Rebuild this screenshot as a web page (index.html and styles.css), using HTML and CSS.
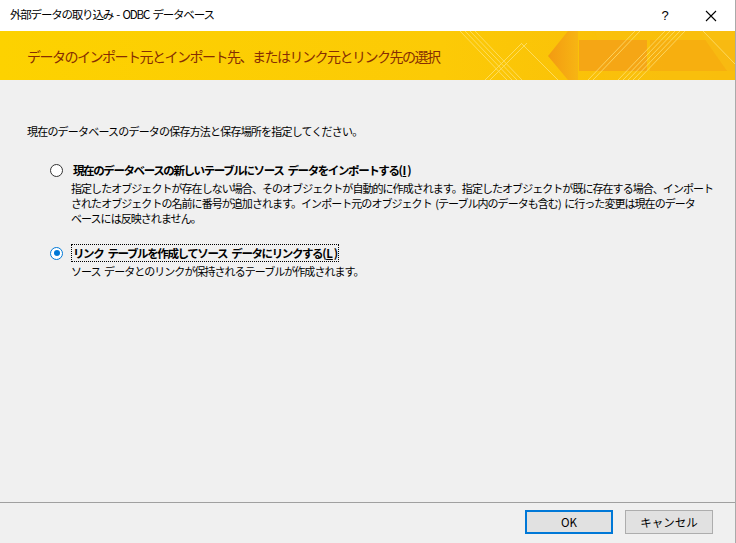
FILE: index.html
```html
<!DOCTYPE html>
<html>
<head>
    <title>外部データの取り込み - ODBC データベース</title>
    <link rel="stylesheet" href="styles.css">
</head>
<body>
    <div class="dialog">
        <div class="titlebar">
            <span class="title">外部データの取り込み - ODBC データベース</span>
            <span class="help">?</span>
            <span class="close">
                <svg width="12" height="12" viewBox="0 0 12 12"><path d="M1 1L11 11M11 1L1 11" stroke="#000" stroke-width="1.1" fill="none"/></svg>
            </span>
        </div>

        <div class="banner">
            <svg class="banner-art" width="290" height="49" viewBox="0 0 290 49">
                <defs>
                    <linearGradient id="arrowfill" x1="0" x2="1" y1="0" y2="0">
                        <stop offset="0" stop-color="#f39a12"/>
                        <stop offset="1" stop-color="#f7b513"/>
                    </linearGradient>
                </defs>
                <polygon points="150,0 290,0 290,49 160,49" fill="#f9c10d" opacity="0.7"/>
                <polygon points="205,9 290,9 290,40 205,40" fill="#f6ab10" opacity="0.8"/>
                <polygon points="254,0 290,0 290,40 282,40" fill="#f9c213" opacity="0.6"/>
                <polygon points="123,0 133,0 133,49 123,49 103,25" fill="url(#arrowfill)"/>
                <rect x="134" y="9" width="68" height="31" fill="#f5a615"/>
                <g stroke="#ffe680" stroke-width="1" opacity="0.7">
                    <line x1="15" y1="0" x2="62" y2="49"/>
                    <line x1="20" y1="0" x2="67" y2="49"/>
                    <line x1="25" y1="0" x2="72" y2="49"/>
                    <line x1="30" y1="0" x2="77" y2="49"/>
                    <line x1="40" y1="49" x2="77" y2="12"/>
                    <line x1="45" y1="49" x2="82" y2="12"/>
                    <line x1="76" y1="12" x2="113" y2="49"/>
                    <line x1="190" y1="0" x2="143" y2="49"/>
                    <line x1="195" y1="0" x2="148" y2="49"/>
                    <line x1="220" y1="0" x2="173" y2="49"/>
                    <line x1="225" y1="0" x2="178" y2="49"/>
                    <line x1="230" y1="0" x2="183" y2="49"/>
                    <line x1="235" y1="0" x2="188" y2="49"/>
                    <line x1="240" y1="0" x2="193" y2="49"/>
                    <line x1="258" y1="0" x2="290" y2="33"/>
                </g>
            </svg>
            <h1>データのインポート元とインポート先、またはリンク元とリンク先の選択</h1>
        </div>

        <div class="content">
            <p class="intro">現在のデータベースのデータの保存方法と保存場所を指定してください。</p>

            <div class="option">
                <label class="choice">
                    <span class="radio"></span>
                    <span class="choice-text">現在のデータベースの新しいテーブルにソース データをインポートする(<u>I</u>)</span>
                </label>
                <p class="desc">指定したオブジェクトが存在しない場合、そのオブジェクトが自動的に作成されます。指定したオブジェクトが既に存在する場合、インポート<br>されたオブジェクトの名前に番号が追加されます。インポート元のオブジェクト (テーブル内のデータも含む) に行った変更は現在のデータ<br>ベースには反映されません。</p>
            </div>

            <div class="option">
                <label class="choice">
                    <span class="radio checked"></span>
                    <span class="choice-text focused">リンク テーブルを作成してソース データにリンクする(<u>L</u>)</span>
                </label>
                <p class="desc">ソース データとのリンクが保持されるテーブルが作成されます。</p>
            </div>
        </div>

        <div class="footer">
            <button class="btn default">OK</button>
            <button class="btn">キャンセル</button>
        </div>
    </div>
</body>
</html>
```

FILE: styles.css
```css
html, body {
    margin: 0;
    padding: 0;
}
body {
    font-family: "Noto Sans CJK JP", "Noto Sans", sans-serif;
    font-size: 11px;
    color: #000;
    background: #f0f0f0;
}
.dialog {
    width: 736px;
    height: 543px;
    display: flex;
    flex-direction: column;
    background: #f0f0f0;
    border-right: 1px solid #aaa;
    box-sizing: border-box;
}
.titlebar {
    height: 31px;
    background: #fff;
    display: flex;
    align-items: center;
    padding-left: 10px;
    flex-shrink: 0;
}
.title {
    flex: 1;
    font-size: 11.5px;
    line-height: 1;
    padding-bottom: 1px;
    letter-spacing: -1.2px;
    word-spacing: 2px;
}
.help {
    width: 46px;
    text-align: center;
    font-family: "Liberation Sans", sans-serif;
    font-size: 13px;
}
.close {
    width: 46px;
    display: flex;
    justify-content: center;
    margin-right: 1px;
}
.banner {
    position: relative;
    height: 49px;
    background: linear-gradient(90deg, #fdd200 0%, #fcca06 60%, #f8b90b 100%);
    display: flex;
    align-items: center;
    flex-shrink: 0;
    overflow: hidden;
}
.banner-art {
    position: absolute;
    right: 0;
    top: 0;
}
.banner h1 {
    position: relative;
    margin: 0 0 0 27px;
    font-size: 14px;
    line-height: 18px;
    font-weight: normal;
    color: #862d03;
    letter-spacing: -1.5px;
}
.content {
    flex: 1;
    padding: 44px 28px 0 27px;
}
.intro {
    margin: 0 0 21px;
    line-height: 15px;
    letter-spacing: -0.8px;
}
.option {
    margin-left: 23px;
    margin-bottom: 17px;
}
.choice {
    display: flex;
    align-items: center;
    height: 20px;
}
.radio {
    width: 11px;
    height: 11px;
    border: 1px solid #333;
    border-radius: 50%;
    background: #fff;
    margin-right: 8px;
    flex-shrink: 0;
    position: relative;
}
.radio.checked {
    border-color: #0078d7;
}
.radio.checked::after {
    content: "";
    position: absolute;
    left: 2.5px;
    top: 2.5px;
    width: 6px;
    height: 6px;
    border-radius: 50%;
    background: #0078d7;
}
.choice-text {
    font-weight: bold;
    font-size: 11.5px;
    line-height: 16px;
    padding: 0 1px;
    border: 1px dotted transparent;
    letter-spacing: -1.4px;
    word-spacing: 3px;
}
.choice-text u {
    letter-spacing: 0;
    padding: 0 1px;
}
.choice-text.focused {
    border-color: #000;
}
.desc {
    margin: 1px 0 0 21px;
    line-height: 15px;
    letter-spacing: -0.95px;
    word-spacing: 2px;
    white-space: nowrap;
}
.footer {
    height: 41px;
    box-sizing: border-box;
    border-top: 1px solid #a0a0a0;
    display: flex;
    justify-content: flex-end;
    align-items: flex-start;
    gap: 12px;
    padding: 7px 22px 0 0;
    flex-shrink: 0;
}
.btn {
    width: 88px;
    height: 24px;
    background: #e1e1e1;
    border: 1px solid #adadad;
    font-family: "Noto Sans CJK JP", sans-serif;
    font-size: 11.5px;
    padding: 0;
}
.btn.default {
    border: 2px solid #0078d7;
}
```
